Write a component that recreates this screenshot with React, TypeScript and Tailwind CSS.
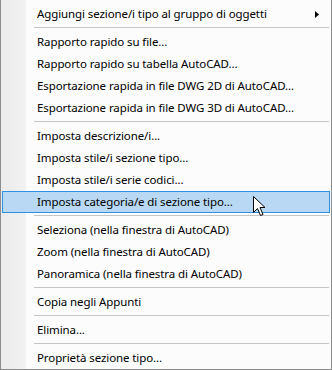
type Entry = { label: string; sub?: boolean; active?: boolean } | 'sep';

const entries: Entry[] = [
  { label: 'Aggiungi sezione/i tipo al gruppo di oggetti', sub: true },
  'sep',
  { label: 'Rapporto rapido su file...' },
  { label: 'Rapporto rapido su tabella AutoCAD...' },
  { label: 'Esportazione rapida in file DWG 2D di AutoCAD...' },
  { label: 'Esportazione rapida in file DWG 3D di AutoCAD...' },
  'sep',
  { label: 'Imposta descrizione/i...' },
  { label: 'Imposta stile/i sezione tipo...' },
  { label: 'Imposta stile/i serie codici...' },
  { label: 'Imposta categoria/e di sezione tipo...', active: true },
  'sep',
  { label: 'Seleziona (nella finestra di AutoCAD)' },
  { label: 'Zoom (nella finestra di AutoCAD)' },
  { label: 'Panoramica (nella finestra di AutoCAD)' },
  'sep',
  { label: 'Copia negli Appunti' },
  'sep',
  { label: 'Elimina...' },
  'sep',
  { label: 'Proprietà sezione tipo...' },
];

function Cursor() {
  return (
    <svg className="absolute left-[252px] top-[196px]" width="13" height="21" viewBox="0 0 13 21">
      <path
        d="M0.5 0.5 L0.5 16.5 L4.5 12.5 L7.5 19.5 L10 18.5 L7 11.5 L12 11.5 Z"
        fill="#fff"
        stroke="#000"
        strokeWidth="1"
        strokeLinejoin="miter"
      />
    </svg>
  );
}

export default function App() {
  return (
    <div
      className="relative w-[332px] h-[370px] bg-[#fcfcfc] border-l border-r border-b border-[#8c8c8c] text-[11.5px] tracking-[-0.1px] text-black"
      style={{ fontFamily: '"Noto Sans", "Open Sans", sans-serif' }}
    >
      <div className="absolute left-0 top-0 bottom-0 w-[25px] bg-gradient-to-r from-[#ebebeb] to-[#f2f2f2]" />
      <div className="relative flex flex-col pt-[3px] px-[1px]">
        {entries.map((e, i) =>
          e === 'sep' ? (
            <div key={i} className="h-[6px] pt-[2px] pl-[32px] pr-[1px]">
              <div className="h-px bg-[#c4c4c4]" />
            </div>
          ) : (
            <div
              key={i}
              className={`h-[22px] flex items-center ${
                e.active ? 'bg-[#b8d8f4] border border-[#2f8fe0] pl-[34px]' : 'pl-[35px]'
              }`}
            >
              <span className="flex-1 whitespace-nowrap">{e.label}</span>
              {e.sub && (
                <svg width="4" height="7" viewBox="0 0 4 7" className="mr-[11px]">
                  <path d="M0 0 L4 3.5 L0 7 Z" fill="#000" />
                </svg>
              )}
            </div>
          )
        )}
      </div>
      <Cursor />
    </div>
  );
}
